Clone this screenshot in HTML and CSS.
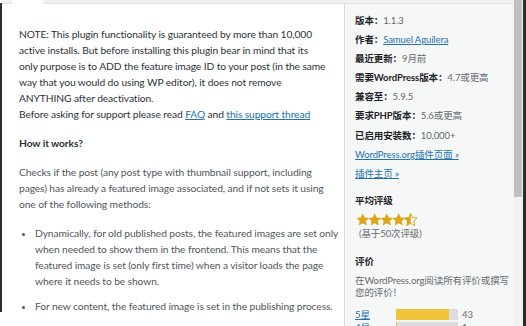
FILE: index.html
```html
<!DOCTYPE html>
<html lang="zh-CN">
<head>
    <meta charset="UTF-8">
    <meta name="viewport" content="width=device-width, initial-scale=1.0">
    <title>插件详情</title>
    <link rel="stylesheet" href="styles.css">
</head>
<body>
    <div class="frame">
        <div class="edge-left"></div>
        <div class="modal">
            <div class="tabs"><span class="tab"></span></div>
            <div class="panes">
                <section class="desc">
                    <p class="lead">NOTE: This plugin functionality is guaranteed by more than 10,000<br>
                    active installs. But before installing this plugin bear in mind that its<br>
                    only purpose is to ADD the feature image ID to your post (in the same<br>
                    way that you would do using WP editor), it does not remove<br>
                    ANYTHING after deactivation.<br>
                    Before asking for support please read <a href="#">FAQ</a> and <a href="#">this support thread</a></p>
                    <p class="lead">How it works?</p>
                    <p>Checks if the post (any post type with thumbnail support, including<br>
                    pages) has already a featured image associated, and if not sets it using<br>
                    one of the following methods:</p>
                    <ul>
                        <li>Dynamically, for old published posts, the featured images are set only<br>
                        when needed to show them in the frontend. This means that the<br>
                        featured image is set (only first time) when a visitor loads the page<br>
                        where it needs to be shown.</li>
                        <li>For new content, the featured image is set in the publishing process.</li>
                    </ul>
                    <p>You only need to install and activate it, it will just do its job.</p>
                </section>
                <aside class="meta">
                    <ul class="facts">
                        <li><strong>版本：</strong>1.1.3</li>
                        <li><strong>作者：</strong><a href="#">Samuel Aguilera</a></li>
                        <li><strong>最近更新：</strong>9月前</li>
                        <li><strong>需要WordPress版本：</strong>4.7或更高</li>
                        <li><strong>兼容至：</strong>5.9.5</li>
                        <li><strong>要求PHP版本：</strong>5.6或更高</li>
                        <li><strong>已启用安装数：</strong>10,000+</li>
                        <li><a href="#">WordPress.org插件页面 »</a></li>
                        <li><a href="#">插件主页 »</a></li>
                    </ul>
                    <h3>平均评级</h3>
                    <div class="stars">
                        <svg viewBox="0 0 24 24"><polygon class="full" points="12,2 15.1,8.6 22,9.3 16.8,14 18.2,21 12,17.3 5.8,21 7.2,14 2,9.3 8.9,8.6"/></svg>
                        <svg viewBox="0 0 24 24"><polygon class="full" points="12,2 15.1,8.6 22,9.3 16.8,14 18.2,21 12,17.3 5.8,21 7.2,14 2,9.3 8.9,8.6"/></svg>
                        <svg viewBox="0 0 24 24"><polygon class="full" points="12,2 15.1,8.6 22,9.3 16.8,14 18.2,21 12,17.3 5.8,21 7.2,14 2,9.3 8.9,8.6"/></svg>
                        <svg viewBox="0 0 24 24"><polygon class="full" points="12,2 15.1,8.6 22,9.3 16.8,14 18.2,21 12,17.3 5.8,21 7.2,14 2,9.3 8.9,8.6"/></svg>
                        <svg viewBox="0 0 24 24"><polygon class="outline" points="12,2 15.1,8.6 22,9.3 16.8,14 18.2,21 12,17.3 5.8,21 7.2,14 2,9.3 8.9,8.6"/><polygon class="full" points="12,2 12,17.3 5.8,21 7.2,14 2,9.3 8.9,8.6"/></svg>
                    </div>
                    <div class="num-ratings">(基于50次评级)</div>
                    <h3>评价</h3>
                    <p class="reviews">在WordPress.org阅读所有评价或撰写您的评价！</p>
                    <div class="counter">
                        <a href="#">5星</a>
                        <span class="bar"><span class="fill" style="width: 86%"></span></span>
                        <span class="count">43</span>
                    </div>
                    <div class="counter">
                        <a href="#">4星</a>
                        <span class="bar"><span class="fill" style="width: 2%"></span></span>
                        <span class="count">1</span>
                    </div>
                </aside>
            </div>
        </div>
        <div class="scrollbar"><div class="thumb"></div></div>
        <div class="edge-right"></div>
    </div>
</body>
</html>
```

FILE: styles.css
```css
body {
    margin: 0;
    background-color: #fff;
    font-family: Lato, 'Noto Sans CJK SC', sans-serif;
    overflow: hidden;
}
.frame {
    display: flex;
    height: 326px;
    overflow: hidden;
}
.edge-left {
    width: 2px;
    background-color: #2c2c2c;
    margin: 3px 0 14px;
}
.edge-right {
    width: 3px;
    background-color: #2b2b2b;
}
.modal {
    flex: 1;
    display: flex;
    flex-direction: column;
    min-width: 0;
}
.tabs {
    height: 3px;
    background-color: #f0f0f1;
    border-bottom: 1px solid #e2e4e7;
    flex-shrink: 0;
}
.tab {
    display: block;
    width: 31px;
    height: 4px;
    margin-left: 10px;
    background-color: #fff;
}
.panes {
    flex: 1;
    display: flex;
    min-height: 0;
}
.desc {
    flex: 1;
    padding: 22px 0 0 17px;
    font-size: 10.25px;
    letter-spacing: -0.1px;
    line-height: 16px;
    color: #50575e;
    white-space: nowrap;
    overflow: hidden;
}
.desc p {
    margin: 0 0 13px;
}
.desc .lead {
    color: #2c3338;
}
.desc p.lead + p.lead {
    font-weight: 700;
}
.desc ul {
    margin: 10px 0 10px;
    padding-left: 16px;
}
.desc li + li {
    margin-top: 9px;
}
a {
    color: #2271b1;
    text-decoration: underline;
}
.meta {
    width: 158px;
    flex-shrink: 0;
    padding: 7px 0 0 10px;
    background-color: #f6f7f7;
    border-left: 1px solid #dcdcde;
    font-size: 9.5px;
    letter-spacing: -0.1px;
    color: #646970;
    overflow: hidden;
}
.facts {
    list-style: none;
    margin: 0;
    padding: 0;
}
.facts li {
    line-height: 19.1px;
    white-space: nowrap;
}
.facts strong {
    color: #1d2327;
    font-weight: 700;
}
.meta h3 {
    margin: 9px 0 3px;
    font-size: 9.5px;
    line-height: 18px;
    font-weight: 600;
    color: #1d2327;
}
.stars {
    display: flex;
    height: 14px;
    align-items: center;
}
.stars svg {
    width: 15.5px;
    height: 15.5px;
    margin-right: -3.6px;
}
.stars .full {
    fill: #dba617;
}
.stars .outline {
    fill: none;
    stroke: #dba617;
    stroke-width: 1.5;
}
.num-ratings {
    line-height: 14px;
    padding-left: 4px;
}
.meta .num-ratings + h3 {
    margin-top: 12px;
    margin-bottom: 4px;
}
.reviews {
    margin: 0 0 9px;
    line-height: 12.5px;
}
.counter {
    display: flex;
    align-items: center;
    height: 11px;
    margin-bottom: 2px;
}
.counter a {
    width: 41px;
}
.bar {
    width: 62px;
    height: 11px;
    background-color: #dcdcde;
}
.fill {
    display: block;
    height: 100%;
    background-color: #f0c33c;
}
.count {
    margin-left: 4px;
}
.scrollbar {
    width: 10px;
    background-color: #f1f1f1;
}
.thumb {
    height: 197px;
    background-color: #c1c1c1;
    margin: 0 1px;
}
```
